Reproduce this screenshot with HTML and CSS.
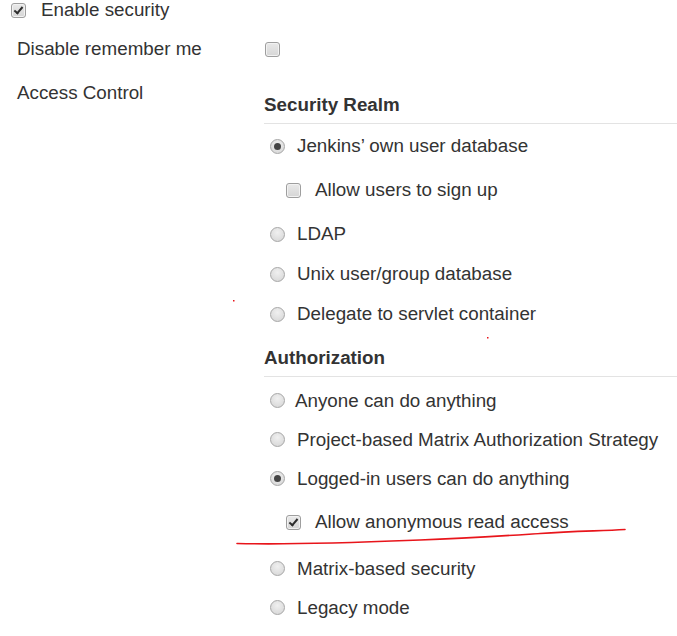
FILE: index.html
```html
<!DOCTYPE html>
<html>
<head>
<meta charset="utf-8">
<link rel="stylesheet" href="styles.css">
</head>
<body>
<div class="page">
  <div class="top-row">
    <span class="cb checked"></span>
    <span class="top-label">Enable security</span>
  </div>
  <div class="form-grid">
    <div class="label row-remember">Disable remember me</div>
    <div class="field row-remember"><span class="cb"></span></div>

    <div class="label label-access">Access Control</div>
    <div class="field field-access">
      <div class="section-head first">Security Realm</div>
      <div class="opt g2"><span class="radio checked"></span><span>Jenkins’ own user database</span></div>
      <div class="sub g4"><span class="cb"></span><span>Allow users to sign up</span></div>
      <div class="opt g4"><span class="radio"></span><span>LDAP</span></div>
      <div class="opt"><span class="radio"></span><span>Unix user/group database</span></div>
      <div class="opt"><span class="radio"></span><span>Delegate to servlet container</span></div>

      <div class="section-head">Authorization</div>
      <div class="opt g4 h39"><span class="radio"></span><span class="tight">Anyone can do anything</span></div>
      <div class="opt h39"><span class="radio"></span><span>Project-based Matrix Authorization Strategy</span></div>
      <div class="opt h39"><span class="radio checked"></span><span>Logged-in users can do anything</span></div>
      <div class="sub g4"><span class="cb checked"></span><span>Allow anonymous read access</span></div>
      <div class="opt g7 h39"><span class="radio"></span><span>Matrix-based security</span></div>
      <div class="opt h39"><span class="radio"></span><span>Legacy mode</span></div>
    </div>
  </div>

  <svg class="annotation" width="677" height="636" viewBox="0 0 677 636">
    <path d="M237 543.5 C 300 545, 370 542, 420 540 C 470 538, 500 536, 540 533.5 C 575 531, 600 531, 625 529.5" fill="none" stroke="#e8151b" stroke-width="1.6" stroke-linecap="round"/>
    <rect x="233" y="300" width="1.5" height="1.5" fill="#e8151b"/>
    <rect x="487" y="337" width="1.5" height="1.5" fill="#e8151b"/>
  </svg>
</div>
</body>
</html>
```

FILE: styles.css
```css
html, body {
  margin: 0;
  padding: 0;
  background: #fff;
}
body {
  font-family: "Liberation Sans", Arial, sans-serif;
  font-size: 18.8px;
  color: #333;
}
.page {
  position: relative;
  width: 677px;
  height: 636px;
  overflow: hidden;
}
.top-row {
  height: 20px;
  display: flex;
  align-items: center;
  padding-left: 11px;
  gap: 15px;
}
.form-grid {
  display: grid;
  grid-template-columns: 265px 1fr;
  margin-top: 9px;
}
.label {
  padding-left: 17px;
  white-space: nowrap;
}
.row-remember {
  height: 40px;
  display: flex;
  align-items: center;
}
.label-access {
  margin-top: 9px;
  padding-top: 5px;
  line-height: 20px;
}
.field {
  min-width: 0;
}
.field-access {
  margin-top: 10px;
}
.section-head {
  font-weight: bold;
  line-height: 20px;
  padding-top: 6px;
  padding-bottom: 8px;
  margin-left: -1px;
  margin-top: 8px;
  border-bottom: 1px solid #e3e3e3;
}
.section-head.first {
  margin-top: 10px;
}
.opt {
  height: 40px;
  display: flex;
  align-items: center;
  padding-left: 5px;
  gap: 12px;
  white-space: nowrap;
}
.opt.h39 { height: 39px; }
.sub {
  height: 40px;
  display: flex;
  align-items: center;
  padding-left: 21px;
  gap: 14px;
  white-space: nowrap;
}
.g2 { margin-top: 2px; }
.g4 { margin-top: 4px; }
.g7 { margin-top: 7px; }
.tight { margin-left: -2px; }

.cb {
  box-sizing: border-box;
  width: 15px;
  height: 15px;
  flex: none;
  border: 1px solid #9e9e9e;
  border-radius: 3px;
  background: linear-gradient(#e9e9e9, #d6d6d6);
  position: relative;
  box-shadow: inset 0 0 0 1px #f2f2f2;
}
.cb.checked::after {
  content: "";
  position: absolute;
  left: 4px;
  top: 1px;
  width: 3px;
  height: 7px;
  border: solid #2e2e2e;
  border-width: 0 2.5px 2.5px 0;
  transform: rotate(40deg);
}
.radio {
  box-sizing: border-box;
  width: 15px;
  height: 15px;
  flex: none;
  border-radius: 50%;
  border: 1px solid #a6a6a6;
  background: radial-gradient(circle at 50% 35%, #f0f0f0, #d4d4d4);
  position: relative;
}
.radio.checked::after {
  content: "";
  position: absolute;
  left: 3px;
  top: 3px;
  width: 7px;
  height: 7px;
  border-radius: 50%;
  background: #444;
}
.annotation {
  position: absolute;
  left: 0;
  top: 0;
  pointer-events: none;
}
```
